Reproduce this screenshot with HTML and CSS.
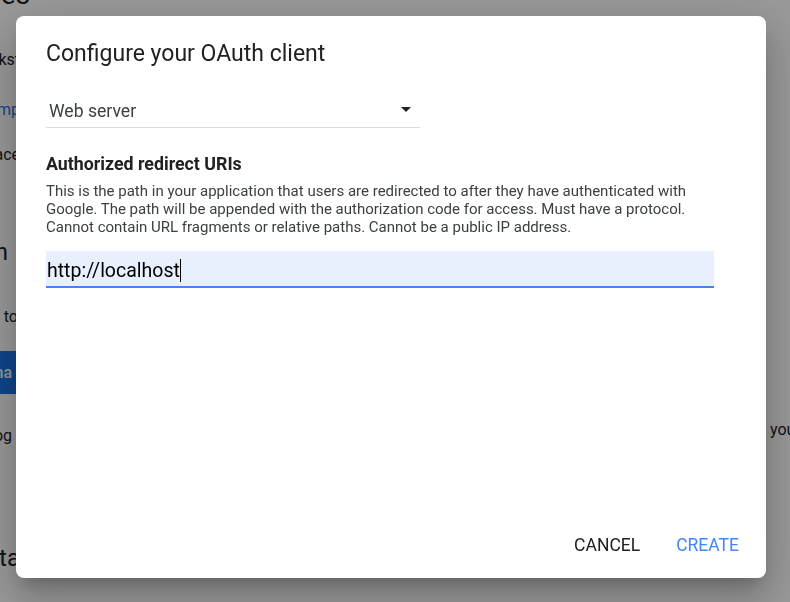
FILE: index.html
```html
<!DOCTYPE html>
<html lang="en">
<head>
<meta charset="utf-8">
<title>Configure your OAuth client</title>
<link rel="stylesheet" href="styles.css">
</head>
<body>
<div class="page">
  <div class="page-left">
    <h1 class="page-title">APIs &amp; Services</h1>
    <p class="line l-quick">See the quickst</p>
    <p class="line l-link"><a class="link">for an examp</a></p>
    <p class="line l-ui">from the user interface</p>
    <h2 class="page-h2 h-with">Sign in with</h2>
    <p class="line l-to">then go to</p>
    <div class="btn-row"><span class="page-btn">Open the na</span></div>
    <p class="line l-blog">Read the blog</p>
    <h2 class="page-h2 h-meta">Client metadata</h2>
  </div>
  <div class="page-right">
    <p class="line r-your">your project</p>
  </div>
</div>

<div class="scrim"></div>

<div class="dialog" role="dialog">
  <h2 class="dialog-title">Configure your OAuth client</h2>

  <div class="select">
    <span class="select-value">Web server</span>
    <svg class="select-arrow" width="10" height="5" viewBox="0 0 10 5"><path d="M0 0h10L5 5z"/></svg>
  </div>

  <h3 class="field-label">Authorized redirect URIs</h3>
  <p class="field-help">This is the path in your application that users are redirected to after they have authenticated with Google. The path will be appended with the authorization code for access. Must have a protocol. Cannot contain URL fragments or relative paths. Cannot be a public IP address.</p>

  <div class="input">
    <span class="input-text">http://localhost</span><span class="caret"></span>
  </div>

  <div class="actions">
    <button class="btn btn-cancel">Cancel</button>
    <button class="btn btn-create">Create</button>
  </div>
</div>
</body>
</html>
```

FILE: styles.css
```css
* { box-sizing: border-box; }

html, body {
  margin: 0;
  padding: 0;
  width: 790px;
  height: 602px;
  overflow: hidden;
  background: #fff;
  font-family: Roboto, "Liberation Sans", Arial, sans-serif;
}

/* ---------- page behind the dialog ---------- */
.page {
  display: flex;
  justify-content: space-between;
  height: 602px;
  overflow: hidden;
  color: #202124;
}

.page-left {
  width: 300px;
  margin-left: -280px;
  text-align: right;
  white-space: nowrap;
}

.page-right {
  width: 300px;
  margin-right: -280px;
  white-space: nowrap;
}

.page-title {
  margin: -21px -10px 0 0;
  font-size: 28px;
  line-height: 32px;
  font-weight: 400;
}

.line {
  margin: 0;
  font-size: 16px;
  line-height: 24px;
}

.link { color: #1a73e8; }

.l-quick { margin-top: 37px; }
.l-link { margin-top: 26px; }
.l-ui { margin-top: 21px; }

.page-h2 {
  margin: 0;
  font-size: 24px;
  line-height: 32px;
  font-weight: 400;
}

.h-with { margin-top: 69px; margin-right: 12px; }
.l-to { margin-top: 37px; margin-right: 2px; }

.btn-row {
  margin-top: 22px;
  display: flex;
  justify-content: flex-end;
  margin-right: -20px;
}

.page-btn {
  display: inline-block;
  height: 43px;
  line-height: 43px;
  padding: 0 28px 0 16px;
  background: #1a73e8;
  color: #fff;
  font-size: 16px;
  font-weight: 500;
}

.l-blog { margin-top: 30px; margin-right: 8px; }
.h-meta { margin-top: 94px; }

.r-your { margin-top: 418px; }

/* ---------- scrim ---------- */
.scrim {
  position: fixed;
  inset: 0;
  background: rgba(0, 0, 0, 0.4);
}

/* ---------- dialog ---------- */
.dialog {
  position: fixed;
  left: 16px;
  top: 16px;
  width: 750px;
  height: 562px;
  display: flex;
  flex-direction: column;
  padding: 24px 19px 15px 30px;
  background: #fff;
  border-radius: 8px;
  box-shadow: 0 11px 15px -7px rgba(0,0,0,.2), 0 24px 38px 3px rgba(0,0,0,.14), 0 9px 46px 8px rgba(0,0,0,.12);
}

.dialog-title {
  margin: 0;
  font-size: 23px;
  line-height: 28px;
  font-weight: 400;
  color: #202124;
}

.select {
  margin-top: 24px;
  width: 374px;
  height: 36px;
  display: flex;
  align-items: center;
  justify-content: space-between;
  padding: 2px 9px 0 3px;
  border-bottom: 1px solid #dadce0;
}

.select-value {
  font-size: 17.6px;
  color: #3c4043;
}

.select-arrow { fill: #202124; margin-top: -2px; }

.field-label {
  margin: 25px 0 0;
  font-size: 17.8px;
  line-height: 22px;
  font-weight: 700;
  color: #202124;
}

.field-help {
  margin: 7px 0 0;
  width: 668px;
  font-size: 15px;
  line-height: 18px;
  color: #3c4043;
}

.input {
  margin-top: 15px;
  width: 668px;
  height: 37px;
  display: flex;
  align-items: center;
  padding: 3px 0 0 1px;
  background: #e8f0fe;
  border-bottom: 2px solid #4285f4;
}

.input-text {
  font-size: 19.5px;
  color: #000;
}

.caret {
  width: 1px;
  height: 23px;
  background: #000;
}

.actions {
  margin-top: auto;
  display: flex;
  justify-content: flex-end;
  gap: 20px;
}

.btn {
  height: 36px;
  padding: 0 8px;
  border: 0;
  background: transparent;
  font-family: inherit;
  font-size: 17.5px;
  text-transform: uppercase;
  cursor: pointer;
}

.btn-cancel { color: #202124; }
.btn-create { color: #4285f4; }
```
